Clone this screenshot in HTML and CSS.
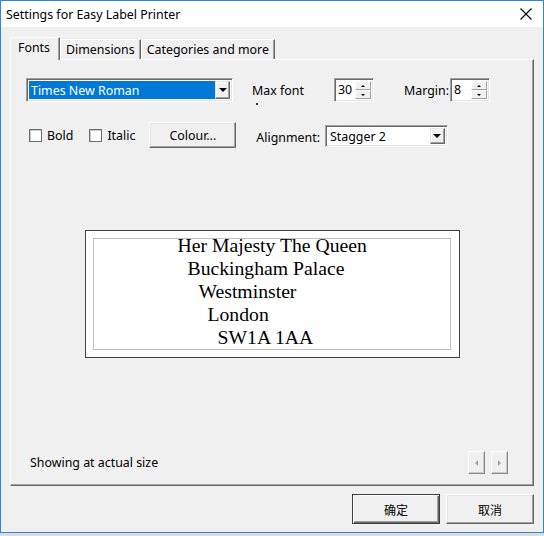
FILE: index.html
```html
<!DOCTYPE html>
<html lang="en">
<head>
    <meta charset="UTF-8">
    <title>Settings for Easy Label Printer</title>
    <link rel="stylesheet" href="styles.css">
</head>
<body>
    <div class="window">
        <div class="titlebar">
            <span class="title">Settings for Easy Label Printer</span>
            <svg class="close" width="12" height="12" viewBox="0 0 12 12">
                <path d="M0.5 0.5 L11.5 11.5 M11.5 0.5 L0.5 11.5" stroke="#000" stroke-width="1.1" fill="none"/>
            </svg>
        </div>
        <div class="client">
            <div class="tabs">
                <div class="tab active">Fonts</div>
                <div class="tab">Dimensions</div>
                <div class="tab">Categories and more</div>
            </div>
            <div class="panel">
                <div class="row row-top">
                    <div class="combo font-combo">
                        <span class="combo-value selected">Times New Roman</span>
                        <span class="drop-btn"><span class="tri-down"></span></span>
                    </div>
                    <div class="label max-font">Max font<span class="dot"></span></div>
                    <div class="spin">
                        <span class="spin-value">30</span>
                        <div class="spin-btns">
                            <span class="spin-btn"><span class="mini-up"></span></span>
                            <span class="spin-btn"><span class="mini-down"></span></span>
                        </div>
                    </div>
                    <div class="label margin-label">Margin:</div>
                    <div class="spin">
                        <span class="spin-value">8</span>
                        <div class="spin-btns">
                            <span class="spin-btn"><span class="mini-up"></span></span>
                            <span class="spin-btn"><span class="mini-down"></span></span>
                        </div>
                    </div>
                </div>
                <div class="row row-second">
                    <div class="check bold-check"><span class="box"></span>Bold</div>
                    <div class="check italic-check"><span class="box"></span>Italic</div>
                    <div class="button colour-btn">Colour...</div>
                    <div class="label align-label">Alignment:</div>
                    <div class="combo align-combo">
                        <span class="combo-value">Stagger 2</span>
                        <span class="drop-btn"><span class="tri-down"></span></span>
                    </div>
                </div>
                <div class="preview">
                    <div class="preview-inner">
                        <div class="address">
                            <div class="line l1">Her Majesty The Queen</div>
                            <div class="line l2">Buckingham Palace</div>
                            <div class="line l3">Westminster</div>
                            <div class="line l4">London</div>
                            <div class="line l5">SW1A 1AA</div>
                        </div>
                    </div>
                </div>
                <div class="status">
                    <span class="status-text">Showing at actual size</span>
                    <div class="scroll-btns">
                        <span class="scroll-btn"><span class="tri-left"></span></span>
                        <span class="scroll-btn"><span class="tri-right"></span></span>
                    </div>
                </div>
            </div>
            <div class="dialog-buttons">
                <div class="button dlg-btn default">确定</div>
                <div class="button dlg-btn">取消</div>
            </div>
        </div>
    </div>
</body>
</html>
```

FILE: styles.css
```css
body {
    margin: 0;
    background: #dcdcdc;
    font-family: "Noto Sans", "Noto Sans CJK SC", sans-serif;
    font-size: 12.4px;
    color: #000;
}
.window {
    width: 544px;
    height: 533px;
    box-sizing: border-box;
    border: 1px solid #2f86d8;
    background: #f0f0f0;
    display: flex;
    flex-direction: column;
}
.titlebar {
    height: 26px;
    background: #fff;
    display: flex;
    align-items: center;
    justify-content: space-between;
    padding: 0 11px 0 5px;
}
.client {
    flex: 1;
    padding: 9px 9px 0 9px;
    display: flex;
    flex-direction: column;
}
.tabs {
    display: flex;
    align-items: flex-end;
    height: 23px;
    position: relative;
    z-index: 1;
}
.tab {
    height: 19px;
    padding: 0 5px 0 5px;
    line-height: 19px;
    border: 1px solid #fff;
    border-right-color: #696969;
    border-bottom: none;
    box-shadow: inset -1px 0 #a0a0a0;
    box-sizing: content-box;
}
.tab.active {
    height: 22px;
    line-height: 20px;
    padding: 0 9px 0 7px;
    background: #f0f0f0;
    margin-bottom: -1px;
}
.panel {
    height: 427px;
    box-sizing: border-box;
    border: 1px solid #fff;
    border-right-color: #696969;
    border-bottom-color: #696969;
    box-shadow: inset -1px -1px #a0a0a0;
    padding: 18px 15px 0 15px;
    display: flex;
    flex-direction: column;
}
.row {
    display: flex;
    align-items: center;
}
.row-top {
    height: 24px;
}
.combo {
    box-sizing: border-box;
    background: #fff;
    border: 1px solid;
    border-color: #a0a0a0 #fff #fff #a0a0a0;
    box-shadow: inset 1px 1px #696969, inset -1px -1px #e3e3e3;
    display: flex;
    align-items: stretch;
    padding: 2px;
}
.font-combo {
    width: 207px;
    height: 24px;
}
.combo-value {
    flex: 1;
    display: flex;
    align-items: center;
    padding-left: 2px;
    white-space: nowrap;
}
.combo-value.selected {
    background: #0078d7;
    color: #fff;
}
.drop-btn {
    width: 15px;
    box-sizing: border-box;
    background: #f0f0f0;
    border: 1px solid;
    border-color: #e3e3e3 #696969 #696969 #e3e3e3;
    box-shadow: inset -1px -1px #a0a0a0, inset 1px 1px #fff;
    display: flex;
    align-items: center;
    justify-content: center;
}
.tri-down {
    width: 0;
    height: 0;
    border-left: 4px solid transparent;
    border-right: 4px solid transparent;
    border-top: 4px solid #000;
}
.label {
    white-space: nowrap;
}
.max-font {
    width: 82px;
    margin-left: 19px;
    position: relative;
}
.dot {
    position: absolute;
    left: 4px;
    top: 21px;
    width: 2px;
    height: 2px;
    background: #333;
}
.spin {
    width: 40px;
    height: 24px;
    box-sizing: border-box;
    background: #fff;
    border: 1px solid;
    border-color: #a0a0a0 #fff #fff #a0a0a0;
    box-shadow: inset 1px 1px #696969, inset -1px -1px #e3e3e3;
    display: flex;
    padding: 2px;
}
.spin-value {
    flex: 1;
    padding-left: 1px;
    line-height: 17px;
}
.spin-btns {
    width: 16px;
    display: flex;
    flex-direction: column;
}
.spin-btn {
    flex: 1;
    box-sizing: border-box;
    background: #f0f0f0;
    border: 1px solid;
    border-color: #fff #a0a0a0 #a0a0a0 #fff;
    display: flex;
    align-items: center;
    justify-content: center;
}
.mini-up {
    border-left: 2px solid transparent;
    border-right: 2px solid transparent;
    border-bottom: 2px solid #000;
}
.mini-down {
    border-left: 2px solid transparent;
    border-right: 2px solid transparent;
    border-top: 2px solid #000;
}
.margin-label {
    width: 46px;
    margin-left: 30px;
}
.row-second {
    height: 26px;
    margin-top: 20px;
}
.check {
    display: flex;
    align-items: center;
    gap: 5px;
}
.bold-check {
    margin-left: 3px;
}
.italic-check {
    margin-left: 16px;
}
.box {
    width: 11px;
    height: 11px;
    background: #fff;
    border: 1px solid #6e6e6e;
    box-shadow: inset 1px 1px #c8c8c8;
}
.button {
    box-sizing: border-box;
    background: #f0f0f0;
    border: 1px solid;
    border-color: #fff #696969 #696969 #fff;
    box-shadow: inset -1px -1px #a0a0a0, inset 1px 1px #e3e3e3;
    display: flex;
    align-items: center;
    justify-content: center;
}
.colour-btn {
    width: 87px;
    height: 26px;
    margin-left: 14px;
}
.align-label {
    margin-left: 20px;
    padding-top: 4px;
}
.align-combo {
    width: 123px;
    height: 22px;
    margin-left: 5px;
    margin-top: 2px;
}
.preview {
    width: 375px;
    height: 128px;
    box-sizing: border-box;
    margin: 82px auto 0;
    border: 1px solid #404040;
    background: #fff;
    padding: 7px 8px 7px 7px;
}
.preview-inner {
    height: 100%;
    box-sizing: border-box;
    border: 1px solid #c0c0c0;
}
.address {
    margin-top: -5px;
    font-family: "Liberation Serif", serif;
    font-size: 19.7px;
    line-height: 23px;
    white-space: nowrap;
}
.l1 { padding-left: 84px; }
.l2 { padding-left: 94px; }
.l3 { padding-left: 105px; }
.l4 { padding-left: 114px; }
.l5 { padding-left: 124px; }
.status {
    display: flex;
    align-items: center;
    justify-content: space-between;
    height: 23px;
    margin-top: 93px;
    padding-left: 4px;
}
.scroll-btns {
    display: flex;
    gap: 6px;
    margin-right: 10px;
}
.scroll-btn {
    width: 17px;
    height: 23px;
    box-sizing: border-box;
    background: #f0f0f0;
    border: 1px solid;
    border-color: #fff #8a8a8a #8a8a8a #fff;
    box-shadow: inset -1px -1px #c8c8c8;
    display: flex;
    align-items: center;
    justify-content: center;
}
.tri-left {
    border-top: 3px solid transparent;
    border-bottom: 3px solid transparent;
    border-right: 3px solid #a0a0a0;
}
.tri-right {
    border-top: 3px solid transparent;
    border-bottom: 3px solid transparent;
    border-left: 3px solid #a0a0a0;
}
.dialog-buttons {
    display: flex;
    justify-content: flex-end;
    gap: 6px;
    margin-top: 8px;
}
.dlg-btn {
    width: 88px;
    height: 30px;
    font-family: "Noto Sans CJK SC", sans-serif;
    font-size: 12px;
}
.dlg-btn.default {
    border-color: #404040;
    box-shadow: inset 1px 1px #fff, inset -1px -1px #696969, inset -2px -2px #a0a0a0;
}
```
